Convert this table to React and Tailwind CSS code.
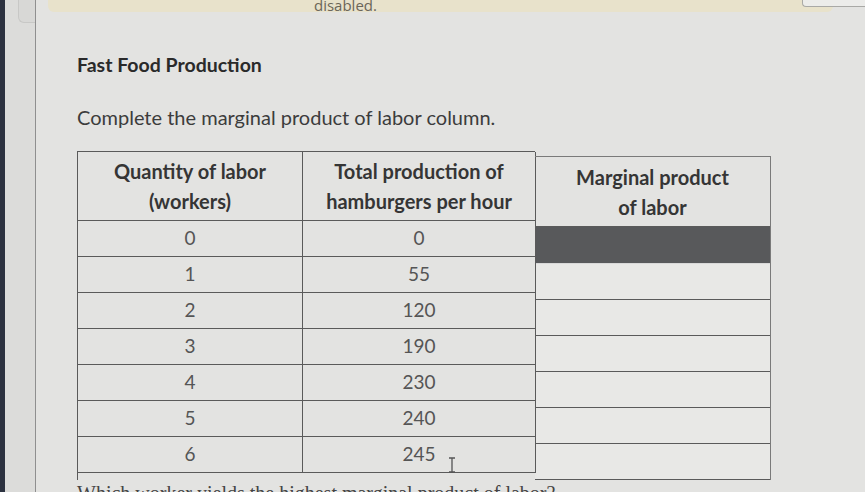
import React from 'react';

const rows = [
  ['0', '0'],
  ['1', '55'],
  ['2', '120'],
  ['3', '190'],
  ['4', '230'],
  ['5', '240'],
  ['6', '245'],
];

export default function App() {
  return (
    <div className="flex h-[492px] w-[865px] overflow-hidden bg-[#2c3240] font-['Lato',sans-serif]">
      {/* left rail */}
      <div className="ml-[5px] w-[31px] shrink-0 border-r border-[#8f8f8f] bg-[#dcdcda]">
        <div className="ml-[13px] h-[23px] rounded-bl-md border-b border-l border-[#c8c8c6] bg-[#d8d8d6]" />
      </div>

      {/* main page */}
      <div className="relative flex-1 bg-[#e3e3e1]">
        {/* notice banner */}
        <div className="ml-[12px] mr-[32px] flex h-[12px] items-end rounded-b-md bg-[#e8e2cb] pl-[266px]">
          <span className="font-['Open_Sans',sans-serif] text-[15px] leading-[14px] text-[#6b6658]">disabled.</span>
        </div>
        <div className="absolute right-0 top-0 h-[7px] w-[63px] rounded-bl border-b border-l border-[#a9a9a6] bg-[#ececea]" />

        <div className="pl-[41px] pt-[40px]">
          <h2 className="text-[19.5px] font-bold leading-[26px] text-[#2a2a2a]">Fast Food Production</h2>
          <p className="mt-[26px] text-[20px] leading-[26px] text-[#3c3c3c]">Complete the marginal product of labor column.</p>

          <div className="mt-[21px] flex">
            <div className="w-[458px] border-l border-t border-[#5a5a5a]">
              <div className="grid grid-cols-[225px_233px]">
                <div className="flex h-[69px] flex-col items-center justify-center border-b border-r border-[#5a5a5a] text-[20px] font-bold leading-[30px] text-[#353535]">
                  <span>Quantity of labor</span>
                  <span>(workers)</span>
                </div>
                <div className="flex h-[69px] flex-col items-center justify-center border-b border-r border-[#5a5a5a] text-[20px] font-bold leading-[30px] text-[#353535]">
                  <span>Total production of</span>
                  <span>hamburgers per hour</span>
                </div>
                {rows.map(([q, t], i) => (
                  <React.Fragment key={i}>
                    <div className="flex h-[36px] items-center justify-center border-b border-r border-[#5a5a5a] text-[19px] text-[#555555]">{q}</div>
                    <div className="relative flex h-[36px] items-center justify-center border-b border-r border-[#5a5a5a] text-[19px] text-[#555555]">
                      {t}
                      {i === 6 && (
                        <svg className="absolute left-[145px] top-[20px]" width="8" height="16" viewBox="0 0 8 16">
                          <path d="M1 1h6M4 1v14M1 15h6" stroke="#555" strokeWidth="1.3" fill="none" />
                        </svg>
                      )}
                    </div>
                  </React.Fragment>
                ))}
              </div>
            </div>

            <div className="mt-[5px] w-[236px] border-t border-r border-[#7a7a7a]">
              <div className="flex h-[70px] flex-col items-center justify-center border-b border-[#5a5a5a] text-[20px] font-bold leading-[30px] text-[#353535]">
                <span>Marginal product</span>
                <span>of labor</span>
              </div>
              <div className="h-[37px] border-b border-[#d8d8d8] bg-[#58595b]" />
              {rows.slice(1).map((r, i) => (
                <div key={i} className="h-[36px] border-b border-[#5a5a5a] bg-[#e8e8e6]" />
              ))}
            </div>
          </div>

          <p className="mt-[1px] font-['Liberation_Serif',serif] text-[20px] leading-[24px] text-[#444444]">
            Which worker yields the highest marginal product of labor?
          </p>
        </div>
      </div>
    </div>
  );
}
